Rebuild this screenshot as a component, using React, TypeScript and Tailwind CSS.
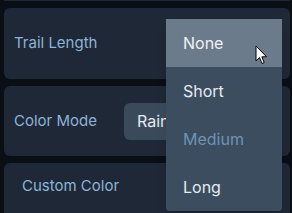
import React from 'react';

const items = [
  { label: 'None', active: true },
  { label: 'Short' },
  { label: 'Medium', disabled: true },
  { label: 'Long' },
];

function Cursor() {
  return (
    <svg
      className="absolute left-[255px] top-[45px] w-[13px] h-[20px]"
      viewBox="0 0 13 20"
    >
      <path
        d="M1 1 L1 16 L4.5 12.5 L7 18.5 L9.2 17.6 L6.8 11.8 L11.5 11.8 Z"
        fill="#fff"
        stroke="#000"
        strokeWidth="1"
        strokeLinejoin="round"
      />
    </svg>
  );
}

export default function App() {
  return (
    <div
      className="relative w-[292px] h-[213px] overflow-hidden bg-[#0a0f16]"
      style={{ fontFamily: 'Inter, "Noto Sans", sans-serif' }}
    >
      <div className="flex flex-col gap-[7px] pl-1 pr-[2px]">
        <div className="h-[1px] bg-[#1e2836] rounded-b-md" />
        <div className="h-[71px] bg-[#1e2836] rounded-md flex items-center px-[10px]">
          <span className="text-[15px] text-[#8db4d8]">Trail Length</span>
        </div>
        <div className="h-[70px] bg-[#1e2836] rounded-md flex items-center px-[10px]">
          <span className="w-[110px] shrink-0 text-[15px] text-[#8db4d8]">Color Mode</span>
          <div className="h-[37px] flex-1 bg-[#3a4a5b] rounded-md flex items-center pl-[13px] text-[16px] text-[#e5ebf1]">
            Rainbow
          </div>
        </div>
        <div className="h-[60px] bg-[#1e2836] rounded-md px-[18px] pt-[10px]">
          <span className="text-[15px] text-[#8db4d8]">Custom Color</span>
        </div>
      </div>

      <div className="absolute left-[166px] top-[19px] w-[116px] bg-[#3b4d5e] rounded-b-[3px] shadow-lg overflow-hidden">
        {items.map((it) => (
          <div
            key={it.label}
            className={`h-[48px] flex items-center pl-[17px] text-[16px] ${
              it.active
                ? 'bg-[#6b7b8b] text-[#eef2f5]'
                : it.disabled
                ? 'text-[#6f93b3]'
                : 'text-[#e5ebf1]'
            }`}
          >
            {it.label}
          </div>
        ))}
      </div>

      <Cursor />
    </div>
  );
}
